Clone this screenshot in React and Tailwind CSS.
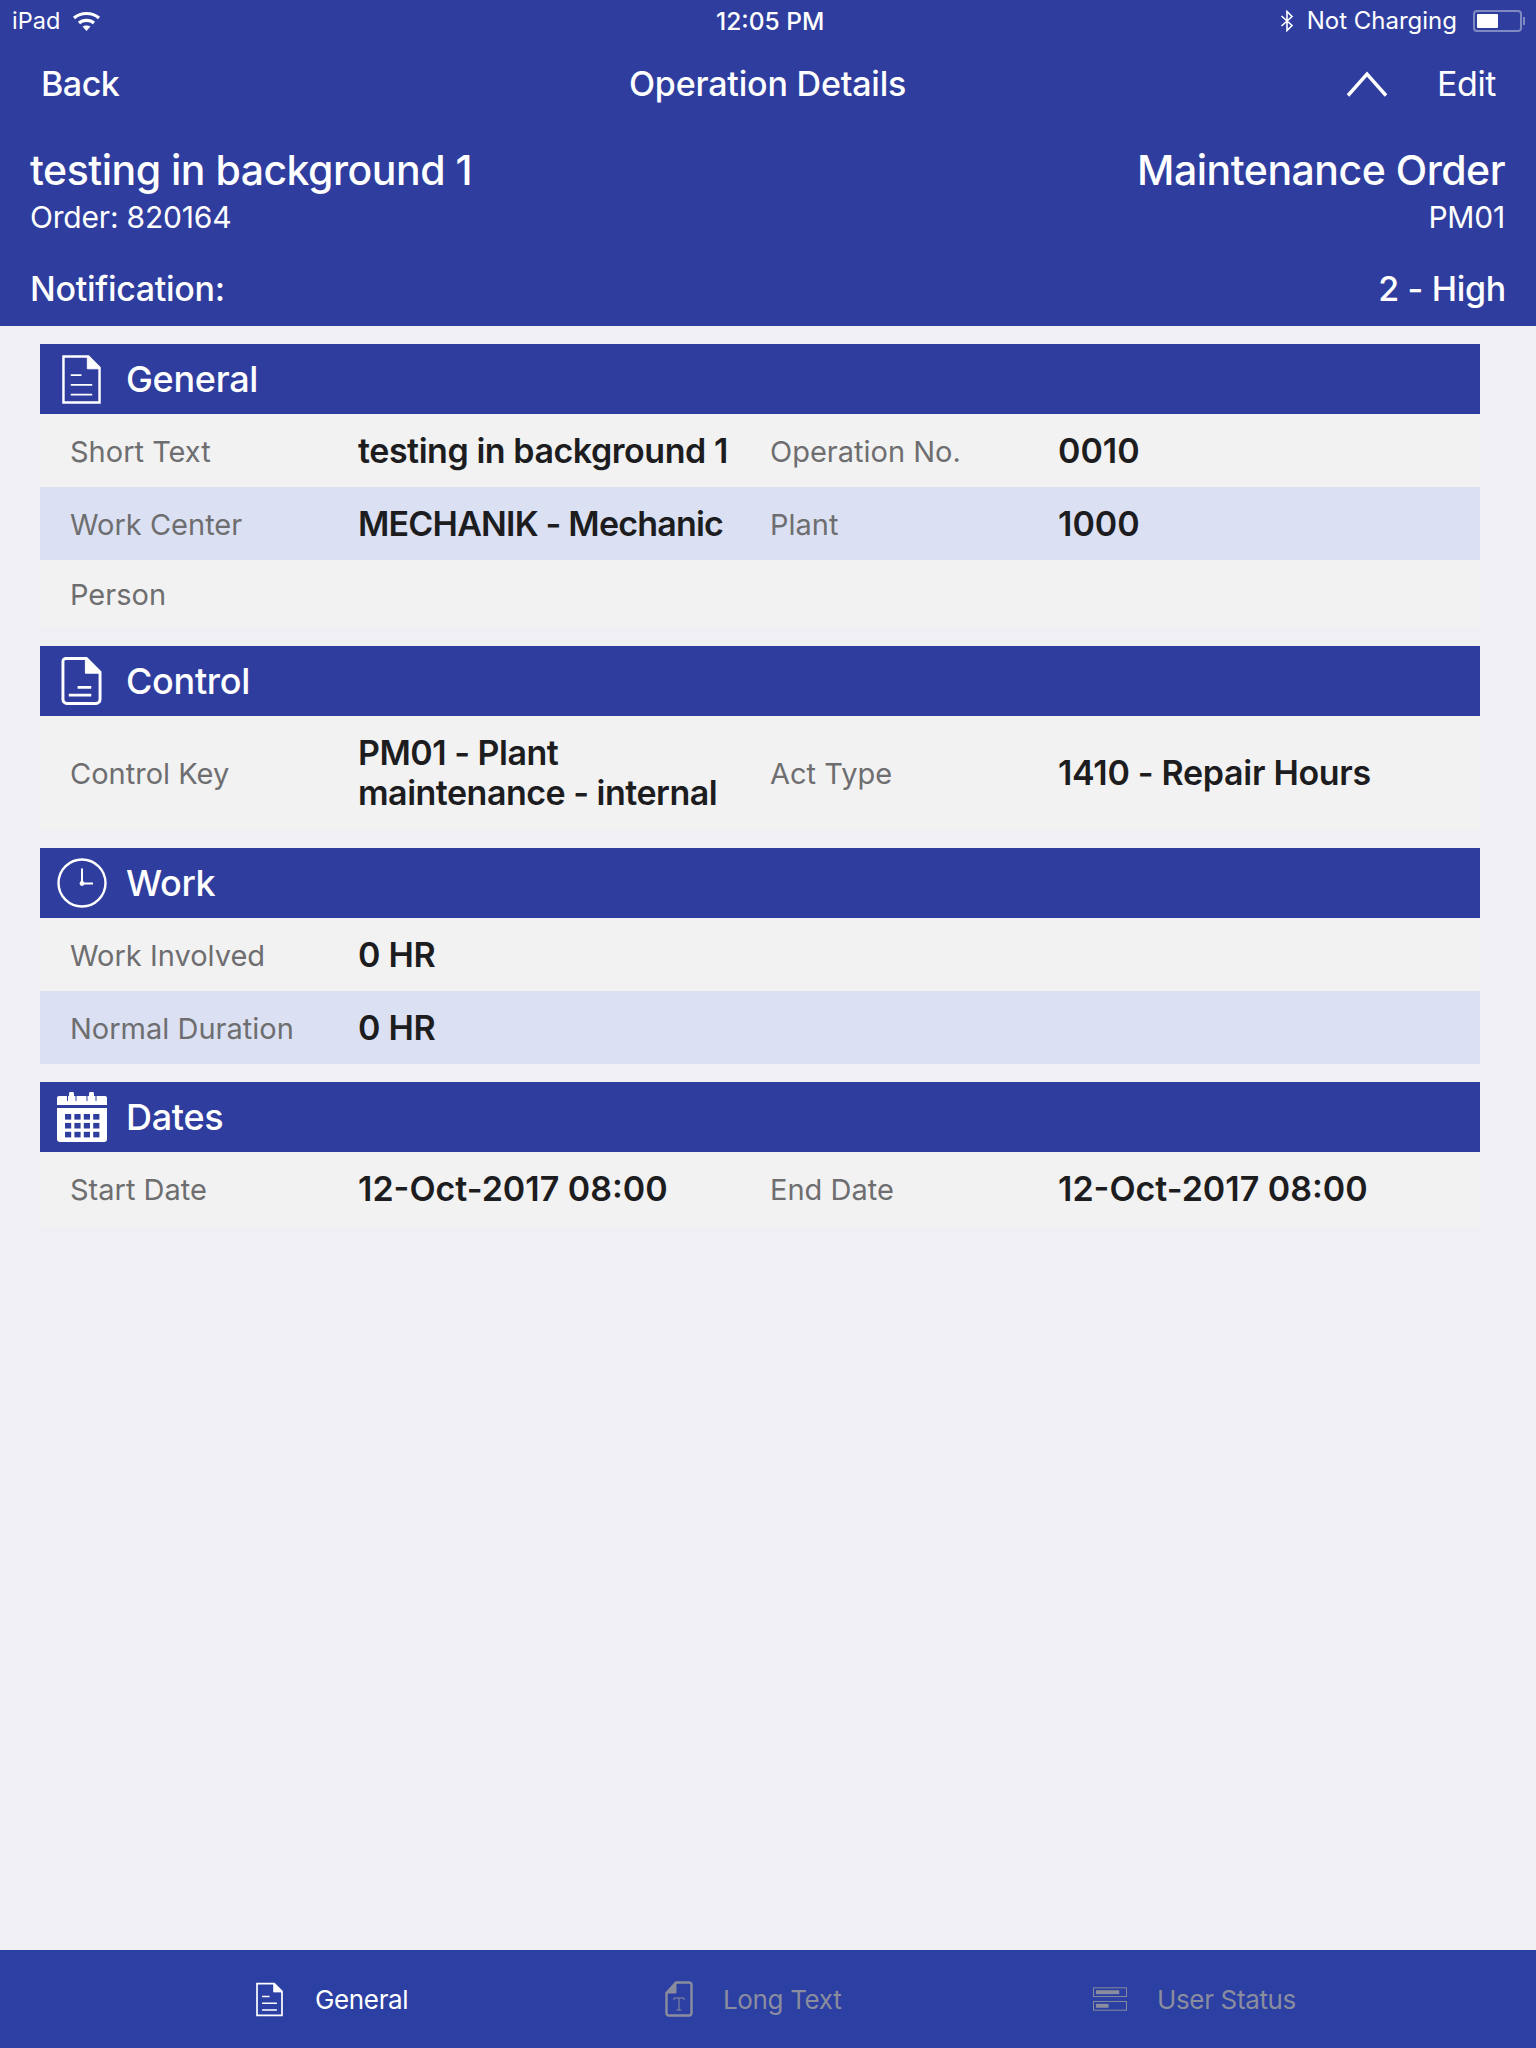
import React from "react";

const Doc = ({ className }) => (
  <svg viewBox="0 0 40 50" className={className} fill="none" stroke="currentColor">
    <path d="M1.5 1.5H27L38.5 13V48.5H1.5Z" strokeWidth="2.5" />
    <path d="M26 1.5V14H38.5L26 1.5Z" fill="currentColor" strokeWidth="1" />
    <path d="M9 20.5H20M9 30.5H31M9 40.5H31" strokeWidth="2" />
  </svg>
);

const DocBold = ({ className }) => (
  <svg viewBox="0 0 42 50" className={className} fill="none" stroke="currentColor">
    <path d="M5 2H26L40 16V44A4 4 0 0 1 36 48H6A4 4 0 0 1 2 44V5A3 3 0 0 1 5 2Z" strokeWidth="3" />
    <path d="M25 2V17H40L25 2Z" fill="currentColor" strokeWidth="1" />
    <path d="M17 31.5H31M8 39.5H31" strokeWidth="3" />
  </svg>
);

const Clock = ({ className }) => (
  <svg viewBox="0 0 50 50" className={className} fill="none" stroke="currentColor">
    <circle cx="25" cy="25" r="23.5" strokeWidth="2.4" />
    <path d="M25 10.5V25.5H36" strokeWidth="2" />
    <circle cx="25" cy="25.5" r="2.4" fill="currentColor" stroke="none" />
  </svg>
);

const Calendar = ({ className }) => {
  const cells = [];
  [0, 1, 2, 3].forEach((c) => [0, 1, 2].forEach((r) => cells.push([8 + c * 9.4, 22 + r * 8.9])));
  return (
    <svg viewBox="0 0 50 50" className={className}>
      <path
        fill="currentColor"
        d="M2 4H12V2A2.5 2.5 0 0 1 17 2V4H32V2A2.5 2.5 0 0 1 37 2V4H48A2 2 0 0 1 50 6V13H0V6A2 2 0 0 1 2 4ZM0 16H50V47A3 3 0 0 1 47 50H3A3 3 0 0 1 0 47Z"
      />
      <path d="M10.5 9V4M19 9V4M30 9V4M39 9V4" stroke="#2f3e9e" strokeWidth="1" />
      {cells.map(([x, y], i) => (
        <rect key={i} x={x} y={y} width="6.2" height="5.6" fill="#2f3e9e" />
      ))}
    </svg>
  );
};

const LongTextIcon = ({ className }) => (
  <svg viewBox="0 0 28 36" className={className} fill="none" stroke="currentColor">
    <path d="M11 1.5H24A2.5 2.5 0 0 1 26.5 4V32A2.5 2.5 0 0 1 24 34.5H4A2.5 2.5 0 0 1 1.5 32V12Z" strokeWidth="2.4" />
    <path d="M11 2V12H2Z" fill="currentColor" strokeWidth="1" />
    <path d="M9 19V17H19V19M14 17V29M11.5 29H16.5" strokeWidth="1" />
  </svg>
);

const StatusIcon = ({ className }) => (
  <svg viewBox="0 0 36 24" className={className} fill="none">
    <rect x="0.5" y="0.5" width="34" height="9" stroke="currentColor" />
    <rect x="3" y="3" width="24" height="4" fill="currentColor" />
    <rect x="0.5" y="14.5" width="34" height="9" stroke="currentColor" />
    <rect x="3" y="17" width="13" height="4" fill="currentColor" />
  </svg>
);

const Wifi = () => (
  <svg viewBox="0 0 29 20" className="w-[29px] h-[20px] ml-[12px]" fill="none" stroke="white" strokeWidth="3.2">
    <path d="M2 7C9 1 20 1 27 7" />
    <path d="M7 12C11 8.5 18 8.5 22 12" />
    <path d="M14.5 20L10.5 15.5C12.5 14 16.5 14 18.5 15.5Z" fill="white" stroke="none" />
  </svg>
);

const Bluetooth = () => (
  <svg viewBox="0 0 14 22" className="w-[14px] h-[22px] mr-[13px]" fill="none" stroke="white" strokeWidth="1.6">
    <path d="M1.5 6L12 15.5L7 20.5V1.5L12 6.5L1.5 16" />
  </svg>
);

const Battery = () => (
  <div className="flex items-center ml-[16px]">
    <div className="w-[49px] h-[22px] rounded-[4px] border-2 border-[#7f89c2] p-[2px]">
      <div className="w-[21px] h-full bg-white rounded-[1px]" />
    </div>
    <div className="w-[2px] h-[8px] bg-[#7f89c2] ml-[1px]" />
  </div>
);

const Label = ({ children }) => (
  <div className="text-[#6e6e70] text-[29px] leading-[36px] translate-y-[1px]">{children}</div>
);
const Value = ({ children, className = "tracking-[-0.45px]" }) => (
  <div className={`text-[#1d1d1f] text-[34px] leading-[40px] font-semibold ${className}`}>{children}</div>
);

const Row = ({ a, b, c, d, alt, h = "h-[73px]", vb, vd }) => (
  <div className={`grid grid-cols-[288px_412px_288px_1fr] items-center pl-[30px] ${h} ${alt ? "bg-[#dbe1f2]" : ""}`}>
    <Label>{a}</Label>
    <Value className={vb}>{b}</Value>
    <Label>{c}</Label>
    <Value className={vd}>{d}</Value>
  </div>
);

const Section = ({ icon, title, children, className = "" }) => (
  <section className={`bg-[#f2f2f2] ${className}`}>
    <div className="h-[70px] bg-[#2f3e9e] flex items-center text-white">
      <div className="w-[83px] mr-[3px] flex justify-center shrink-0">{icon}</div>
      <h2 className="text-[36px] leading-[44px] font-medium tracking-[-0.3px]">{title}</h2>
    </div>
    {children}
  </section>
);

const Tab = ({ icon, label, muted, className }) => (
  <div className={`flex items-center ${muted ? "text-[#8a8d9e]" : "text-white"} ${className}`}>
    {icon}
    <span className="text-[26px] leading-[32px] tracking-[-0.35px] translate-y-[1px]">{label}</span>
  </div>
);

export default function App() {
  return (
    <div className="w-[1536px] h-[2048px] bg-[#efeff4] flex flex-col font-['Inter','Liberation_Sans',sans-serif]">
      <header className="h-[326px] shrink-0 bg-[#2f3e9e] text-white flex flex-col">
        <div className="h-[42px] relative flex items-center justify-between pl-[12px] pr-[11px] text-[24px] leading-[28px]">
          <div className="flex items-center">
            <span className="text-[23.5px]">iPad</span>
            <Wifi />
          </div>
          <span className="absolute left-[716px] top-[7px] font-medium text-[24.5px]">12:05 PM</span>
          <div className="flex items-center">
            <Bluetooth />
            <span>Not Charging</span>
            <Battery />
          </div>
        </div>
        <div className="h-[84px] relative flex items-center justify-between pl-[41px] pr-[40px] text-[34px] leading-[42px]">
          <span className="font-medium tracking-[-0.5px]">Back</span>
          <span className="absolute left-[629px] font-medium tracking-[-0.2px]">Operation Details</span>
          <div className="flex items-center">
            <svg viewBox="0 0 42 26" className="w-[42px] h-[26px] mr-[49px]" fill="none" stroke="white" strokeWidth="3.4">
              <path d="M2 24.5L21 3L40 24.5" />
            </svg>
            <span className="tracking-[-0.4px]">Edit</span>
          </div>
        </div>
        <div className="flex justify-between items-start pl-[30px] pr-[31px] pt-[20px]">
          <div>
            <div className="text-[41px] leading-[48px] font-medium tracking-[-0.5px]">testing in background 1</div>
            <div className="text-[30px] leading-[36px] mt-[5px] tracking-[-0.2px]">Order: 820164</div>
          </div>
          <div className="text-right">
            <div className="text-[41px] leading-[48px] font-medium tracking-[-0.5px]">Maintenance Order</div>
            <div className="text-[30px] leading-[36px] mt-[5px] tracking-[-0.2px]">PM01</div>
          </div>
        </div>
        <div className="flex justify-between px-[30px] mt-[33px] text-[34px] leading-[42px] font-medium tracking-[-0.3px]">
          <span>Notification:</span>
          <span>2 - High</span>
        </div>
      </header>

      <main className="flex-1 px-[40px] pt-[18px] pr-[56px] flex flex-col">
        <Section icon={<Doc className="w-[39px] h-[49px]" />} title="General" className="mb-[18px]">
          <Row a="Short Text" b="testing in background 1" c="Operation No." d="0010" vb="tracking-[-0.45px]" vd="tracking-[0px]" />
          <Row a="Work Center" b="MECHANIK - Mechanic" c="Plant" d="1000" alt vb="tracking-[-0.8px]" vd="tracking-[0px]" />
          <Row a="Person" h="h-[68px]" />
        </Section>
        <Section icon={<DocBold className="w-[41px] h-[50px]" />} title="Control" className="mb-[18px]">
          <Row a="Control Key" b={<>PM01 - Plant<br />maintenance - internal</>} c="Act Type" d="1410 - Repair Hours" h="h-[114px]" vb="tracking-[-0.5px]" vd="tracking-[-0.3px]" />
        </Section>
        <Section icon={<Clock className="w-[50px] h-[50px]" />} title="Work" className="mb-[18px]">
          <Row a="Work Involved" b="0 HR" vb="tracking-[-0.3px]" />
          <Row a="Normal Duration" b="0 HR" alt vb="tracking-[-0.3px]" />
        </Section>
        <Section icon={<Calendar className="w-[50px] h-[50px]" />} title="Dates">
          <Row a="Start Date" b="12-Oct-2017 08:00" c="End Date" d="12-Oct-2017 08:00" h="h-[74px]" vb="tracking-[0px]" vd="tracking-[0px]" />
        </Section>
      </main>

      <nav className="h-[98px] shrink-0 bg-[#2c3fa2] flex items-center">
        <Tab className="ml-[256px] w-[409px]" icon={<Doc className="w-[27px] h-[35px] mr-[32px]" />} label="General" />
        <Tab muted className="w-[428px]" icon={<LongTextIcon className="w-[28px] h-[36px] mr-[30px]" />} label="Long Text" />
        <Tab muted icon={<StatusIcon className="w-[35px] h-[24px] mr-[29px]" />} label="User Status" />
      </nav>
    </div>
  );
}
